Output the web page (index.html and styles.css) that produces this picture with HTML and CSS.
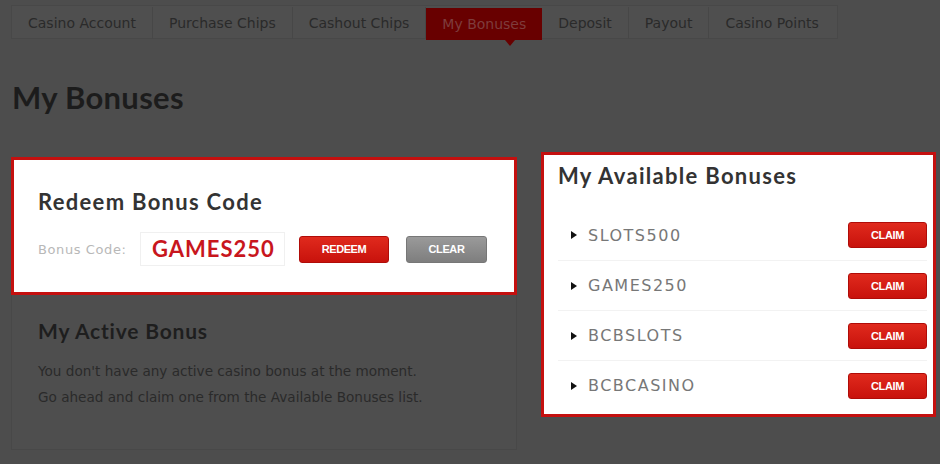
FILE: index.html
```html
<!DOCTYPE html>
<html>
<head>
	<title>My Bonuses</title>
	<link rel="stylesheet" href="styles.css">
</head>
<body>
	<ul class="tabs">
		<li>Casino Account</li>
		<li>Purchase Chips</li>
		<li>Cashout Chips</li>
		<li class="active">My Bonuses</li>
		<li>Deposit</li>
		<li>Payout</li>
		<li class="last">Casino Points</li>
	</ul>

	<h1 class="page-title">My Bonuses</h1>

	<div class="columns">
		<div class="left-col">
			<div class="card redeem">
				<h2>Redeem Bonus Code</h2>
				<div class="code-row">
					<span class="code-label">Bonus Code:</span>
					<span class="code-input">GAMES250</span>
					<span class="btn red wide">REDEEM</span>
					<span class="btn grey">CLEAR</span>
				</div>
			</div>
			<div class="active-panel">
				<h2>My Active Bonus</h2>
				<p>You don't have any active casino bonus at the moment.<br>
				Go ahead and claim one from the Available Bonuses list.</p>
			</div>
		</div>

		<div class="card available">
			<h2>My Available Bonuses</h2>
			<ul class="bonus-list">
				<li><span class="code"><span class="arrow"></span>SLOTS500</span><span class="btn red claim">CLAIM</span></li>
				<li><span class="code"><span class="arrow"></span>GAMES250</span><span class="btn red claim">CLAIM</span></li>
				<li><span class="code"><span class="arrow"></span>BCBSLOTS</span><span class="btn red claim">CLAIM</span></li>
				<li><span class="code"><span class="arrow"></span>BCBCASINO</span><span class="btn red claim">CLAIM</span></li>
			</ul>
		</div>
	</div>
</body>
</html>
```

FILE: styles.css
```css
html {
	height: 100%;
}
body {
	margin: 0;
	padding: 5px 0 0 11px;
	background-color: #4d4d4d;
	font-family: "DejaVu Sans", Verdana, sans-serif;
	color: #222;
	height: 100%;
	box-sizing: border-box;
}
.tabs {
	list-style: none;
	margin: 0;
	padding: 2px 0;
	display: flex;
	width: 827px;
	height: 34px;
	background-color: #4f4f4f;
	border: 1px solid #484848;
	box-sizing: border-box;
}
.tabs li {
	position: relative;
	padding: 0 16px;
	font-size: 14px;
	line-height: 32px;
	color: #2a2a2a;
	border-right: 1px solid #474747;
	height: 32px;
	margin-top: -1px;
}
.tabs li.last {
	border-right: none;
}
.tabs li.active {
	background-color: #680000;
	color: #7e3c3c;
	margin-top: 0;
	border-right: none;
}
.tabs li.active::after {
	content: "";
	position: absolute;
	left: 79px;
	bottom: -6px;
	border-left: 5px solid transparent;
	border-right: 5px solid transparent;
	border-top: 6px solid #680000;
}
.page-title {
	margin: 39px 0 0 1px;
	font-family: Lato, sans-serif;
	font-weight: 700;
	font-size: 31px;
	line-height: 38px;
	letter-spacing: 0.3px;
	color: #1c1c1c;
}
.columns {
	display: flex;
	align-items: flex-start;
	gap: 24px;
	margin-top: 41px;
}
.left-col {
	width: 506px;
}
.card {
	background-color: #fff;
	border: 3px solid #c4100f;
	box-sizing: border-box;
}
.card h2 {
	margin: 0;
	font-family: Lato, sans-serif;
	font-weight: 700;
	font-size: 22px;
	line-height: 26px;
	letter-spacing: 1.3px;
	color: #333;
}
.redeem {
	height: 138px;
	padding: 29px 0 0 24px;
}
.code-row {
	display: flex;
	align-items: center;
	margin-top: 17px;
}
.code-label {
	font-size: 13px;
	letter-spacing: 0.6px;
	color: #b8b8b8;
	width: 102px;
}
.code-input {
	width: 145px;
	height: 34px;
	box-sizing: border-box;
	border: 1px solid #f0f0f0;
	padding-left: 11px;
	font-family: Lato, sans-serif;
	font-weight: 700;
	font-size: 22px;
	line-height: 32px;
	letter-spacing: 1px;
	color: #c8161d;
	margin-right: 14px;
}
.btn {
	display: inline-block;
	height: 27px;
	line-height: 25px;
	text-align: center;
	border-radius: 3px;
	color: #fff;
	font-family: "Liberation Sans", Arial, sans-serif;
	font-weight: 700;
	font-size: 11px;
	letter-spacing: -0.4px;
}
.btn.red {
	background: linear-gradient(#e02a1d, #c8120c);
	border: 1px solid #b00c08;
	box-sizing: border-box;
}
.btn.grey {
	background: linear-gradient(#9a9a9a, #7e7e7e);
	border: 1px solid #777;
	box-sizing: border-box;
	width: 81px;
}
.btn.wide {
	width: 90px;
	margin-right: 17px;
}
.active-panel {
	height: 155px;
	background-color: #4e4e4e;
	border: 1px solid #484848;
	border-top: none;
	box-sizing: border-box;
	padding: 23px 0 0 26px;
}
.active-panel h2 {
	margin: 0;
	font-family: Lato, sans-serif;
	font-weight: 700;
	font-size: 21px;
	line-height: 25px;
	letter-spacing: 0.8px;
	color: #1e1e1e;
}
.active-panel p {
	margin: 15px 0 0;
	font-size: 13.6px;
	line-height: 26px;
	color: #2a2a2a;
}
.available {
	width: 395px;
	height: 265px;
	margin-top: -5px;
	padding: 8px 6px 0 14px;
}
.bonus-list {
	list-style: none;
	margin: 21px 0 0;
	padding: 0;
}
.bonus-list li {
	display: flex;
	align-items: center;
	justify-content: space-between;
	height: 50px;
	box-sizing: border-box;
	border-top: 1px solid #f2f2f2;
	padding-left: 13px;
}
.bonus-list li:first-child {
	border-top: none;
}
.bonus-list .code {
	font-size: 16px;
	color: #777;
	letter-spacing: 1.5px;
	display: flex;
	align-items: center;
}
.arrow {
	display: inline-block;
	width: 0;
	height: 0;
	border-top: 4px solid transparent;
	border-bottom: 4px solid transparent;
	border-left: 6px solid #111;
	margin-right: 11px;
}
.btn.claim {
	width: 79px;
	height: 26px;
	line-height: 24px;
}
```
